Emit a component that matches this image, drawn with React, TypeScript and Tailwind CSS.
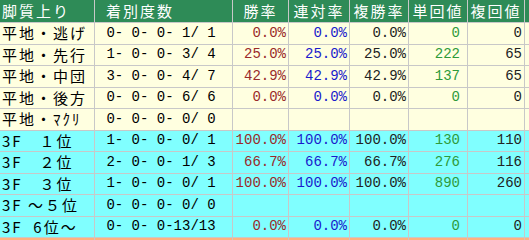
import * as React from 'react'

type Row = {
  label: string
  record: string
  win?: string
  rentai?: string
  fukusho?: string
  tan?: string
  fuku?: string
  tone: 'cream' | 'cyan' | 'orange'
}

const rows: Row[] = [
  {label: '平地・逃げ', record: ' 0- 0- 0- 1/ 1', win: '0.0%', rentai: '0.0%', fukusho: '0.0%', tan: '0', fuku: '0', tone: 'cream'},
  {label: '平地・先行', record: ' 1- 0- 0- 3/ 4', win: '25.0%', rentai: '25.0%', fukusho: '25.0%', tan: '222', fuku: '65', tone: 'cream'},
  {label: '平地・中団', record: ' 3- 0- 0- 4/ 7', win: '42.9%', rentai: '42.9%', fukusho: '42.9%', tan: '137', fuku: '65', tone: 'cream'},
  {label: '平地・後方', record: ' 0- 0- 0- 6/ 6', win: '0.0%', rentai: '0.0%', fukusho: '0.0%', tan: '0', fuku: '0', tone: 'cream'},
  {label: '平地・ﾏｸﾘ', record: ' 0- 0- 0- 0/ 0', tone: 'cream'},
  {label: '3F　１位', record: ' 1- 0- 0- 0/ 1', win: '100.0%', rentai: '100.0%', fukusho: '100.0%', tan: '130', fuku: '110', tone: 'cyan'},
  {label: '3F　２位', record: ' 2- 0- 0- 1/ 3', win: '66.7%', rentai: '66.7%', fukusho: '66.7%', tan: '276', fuku: '116', tone: 'cyan'},
  {label: '3F　３位', record: ' 1- 0- 0- 0/ 1', win: '100.0%', rentai: '100.0%', fukusho: '100.0%', tan: '890', fuku: '260', tone: 'cyan'},
  {label: '3F ～５位', record: ' 0- 0- 0- 0/ 0', tone: 'cyan'},
  {label: '3F  6位～', record: ' 0- 0- 0-13/13', win: '0.0%', rentai: '0.0%', fukusho: '0.0%', tan: '0', fuku: '0', tone: 'cyan'},
  {label: '4角　１位', record: ' 1- 0- 0-11/12', win: '8.3%', rentai: '8.3%', fukusho: '8.3%', tan: '120', fuku: '40', tone: 'orange'},
]

const toneBg = {
  cream: 'bg-[#ffffe0]',
  cyan: 'bg-[#80ffff]',
  orange: 'bg-[#ffb27f]',
}

const jp = "font-['Noto_Sans_CJK_JP',sans-serif] text-[15px] tracking-[2px] whitespace-pre"
const num = "font-['Liberation_Mono',monospace] text-[14px] whitespace-pre"
const cell = 'flex shrink-0 items-center border-r border-b border-[#c8c8c8] overflow-hidden'

const App: React.FC = () => {
  return (
    <div className="h-[240px] w-[529px] overflow-hidden bg-white">
      <div className="w-[600px]">
        <div className={`flex h-[23px] bg-[#2e8b57] text-white ${jp}`}>
          <div className={`${cell} w-[95px] pl-[2px]`}>脚質上り</div>
          <div className={`${cell} w-[138px] pl-[11px]`}>着別度数</div>
          <div className={`${cell} w-[56px] justify-center`}>勝率</div>
          <div className={`${cell} w-[61px] justify-center`}>連対率</div>
          <div className={`${cell} w-[59px] justify-center`}>複勝率</div>
          <div className={`${cell} w-[59px] justify-center`}>単回値</div>
          <div className={`${cell} w-[57px] justify-center`}>複回値</div>
          <div className={`${cell} w-[60px]`}></div>
        </div>
        {rows.map((r, i) => (
          <div key={i} className={`flex h-[21.5px] ${toneBg[r.tone]}`}>
            <div className={`${cell} w-[95px] pl-[2px] text-black ${jp}`}>{r.label}</div>
            <div className={`${cell} w-[138px] pl-[3px] text-black ${num}`}>{r.record}</div>
            <div className={`${cell} w-[56px] justify-end pr-[2px] text-[#9a2a2a] ${num}`}>{r.win}</div>
            <div className={`${cell} w-[61px] justify-end pr-[2px] text-[#1a1acc] ${num}`}>{r.rentai}</div>
            <div className={`${cell} w-[59px] justify-end pr-[2px] text-[#222] ${num}`}>{r.fukusho}</div>
            <div className={`${cell} w-[59px] justify-end pr-[7px] text-[#2e9a3a] ${num}`}>{r.tan}</div>
            <div className={`${cell} w-[57px] justify-end pr-[2px] text-[#222] ${num}`}>{r.fuku}</div>
            <div className={`${cell} w-[60px]`}></div>
          </div>
        ))}
      </div>
    </div>
  )
}

export default App
